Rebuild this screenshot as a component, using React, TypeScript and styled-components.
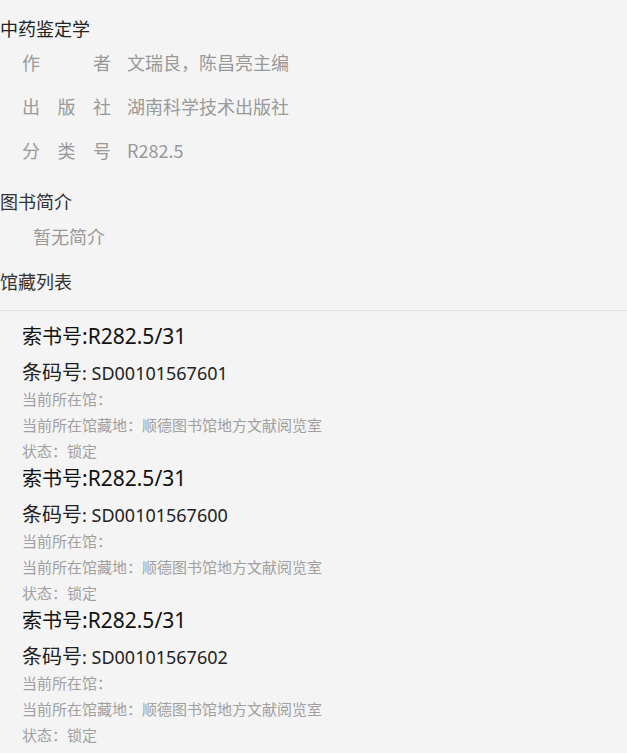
import styled, { createGlobalStyle } from 'styled-components';

const GlobalStyle = createGlobalStyle`
  html, body {
    margin: 0;
    padding: 0;
    background: #f4f4f4;
  }
  body {
    font-family: "Noto Sans CJK SC", "Noto Sans", sans-serif;
    color: #333;
  }
`;

const book = {
  title: '中药鉴定学',
  info: [
    { label: '作者', value: '文瑞良，陈昌亮主编' },
    { label: '出版社', value: '湖南科学技术出版社' },
    { label: '分类号', value: 'R282.5' },
  ],
  summary: '暂无简介',
  holdings: [
    { callNo: 'R282.5/31', barcode: 'SD00101567601', place: '顺德图书馆地方文献阅览室', status: '锁定' },
    { callNo: 'R282.5/31', barcode: 'SD00101567600', place: '顺德图书馆地方文献阅览室', status: '锁定' },
    { callNo: 'R282.5/31', barcode: 'SD00101567602', place: '顺德图书馆地方文献阅览室', status: '锁定' },
  ],
};

function App() {
  return (
    <Page>
      <GlobalStyle />
      <Title>{book.title}</Title>
      {book.info.map((row) => (
        <InfoRow key={row.label}>
          <InfoLabel>{row.label}</InfoLabel>
          <InfoValue>{row.value}</InfoValue>
        </InfoRow>
      ))}

      <SectionHead>图书简介</SectionHead>
      <Summary>{book.summary}</Summary>

      <SectionHead $divider>馆藏列表</SectionHead>
      <HoldingList>
        {book.holdings.map((h) => (
          <Holding key={h.barcode}>
            <CallNo>
              索书号<Code $size={21}>:{h.callNo}</Code>
            </CallNo>
            <Barcode>
              条码号<Code $size={18}>: {h.barcode}</Code>
            </Barcode>
            <Meta>当前所在馆：</Meta>
            <Meta>当前所在馆藏地：{h.place}</Meta>
            <Meta>状态：{h.status}</Meta>
          </Holding>
        ))}
      </HoldingList>
    </Page>
  );
}

const Page = styled.div`
  width: 100%;
  padding-top: 16px;
`;

const Title = styled.div`
  font-size: 18px;
  line-height: 24px;
  color: #222;
`;

const InfoRow = styled.div`
  display: flex;
  align-items: center;
  height: 44px;
  padding-left: 22px;
  font-size: 18px;
  color: #999;
`;

const InfoLabel = styled.span`
  width: 89px;
  text-align: justify;
  text-align-last: justify;
  margin-right: 16px;
`;

const InfoValue = styled.span``;

const SectionHead = styled.div<{ $divider?: boolean }>`
  font-size: 18px;
  line-height: 26px;
  color: #333;
  margin-top: ${(p) => (p.$divider ? '19px' : '16px')};
  padding-bottom: ${(p) => (p.$divider ? '16px' : '0')};
  border-bottom: ${(p) => (p.$divider ? '1px solid #e2e2e2' : 'none')};
`;

const Summary = styled.div`
  font-size: 18px;
  line-height: 26px;
  color: #999;
  margin-top: 9px;
  padding-left: 33px;
`;

const HoldingList = styled.div`
  padding: 11px 0 0 22px;
`;

const Holding = styled.div`
  display: flex;
  flex-direction: column;
`;

const CallNo = styled.div`
  height: 28px;
  font-size: 20px;
  line-height: 28px;
  color: #111;
`;

const Barcode = styled.div`
  height: 28px;
  font-size: 20px;
  line-height: 28px;
  margin-top: 8px;
  color: #222;
`;

const Code = styled.span<{ $size: number }>`
  font-family: "Noto Sans", "Noto Sans CJK SC", sans-serif;
  font-size: ${(p) => p.$size}px;
`;

const Meta = styled.div`
  font-size: 15px;
  line-height: 26px;
  color: #a0a0a0;
`;

export default App;
